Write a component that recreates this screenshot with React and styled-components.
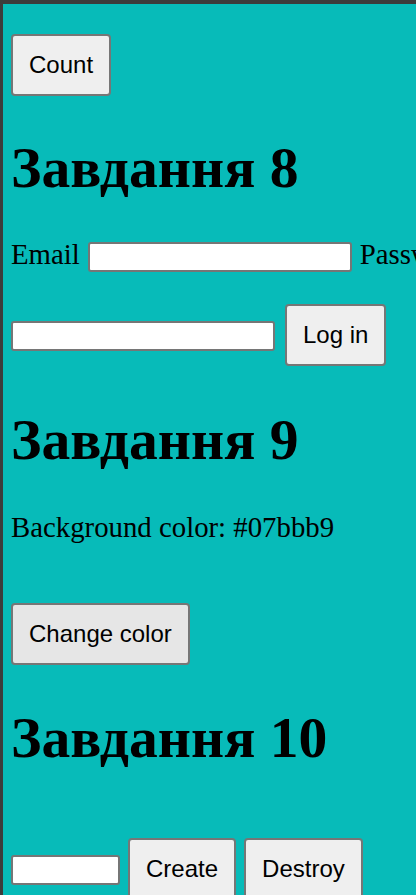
import React from "react";
import styled, { createGlobalStyle } from "styled-components";

const GlobalStyle = createGlobalStyle`
  html, body {
    margin: 0;
    padding: 0;
    overflow: hidden;
    background-color: #3c3c3c;
  }
`;

const Page = styled.div`
  min-height: 100vh;
  box-sizing: border-box;
  border-top: 4px solid #3c3c3c;
  border-left: 3px solid #3c3c3c;
  padding-left: 8px;
  background-color: #07bbb9;
  font-family: "Liberation Serif", "Times New Roman", serif;
  color: #000;
`;

const Button = styled.button`
  box-sizing: border-box;
  height: 62px;
  padding: 0 16px;
  border: 2px solid #767676;
  border-radius: 4px;
  background-color: ${({ $muted }) => ($muted ? "#e6e6e6" : "#efefef")};
  font-family: "Liberation Sans", Arial, sans-serif;
  font-size: 24px;
  line-height: 28px;
  color: #000;
  white-space: nowrap;
  flex-shrink: 0;
`;

const Title = styled.h1`
  margin: ${({ $top }) => $top}px 0 0;
  font-size: 57.6px;
  line-height: 66px;
  font-weight: bold;
`;

const Row = styled.div`
  display: flex;
  align-items: ${({ $align }) => $align || "center"};
  gap: ${({ $gap }) => $gap || 8}px;
  margin-top: ${({ $top }) => $top}px;
  white-space: nowrap;
`;

const Label = styled.span`
  font-size: 28.8px;
  line-height: 33px;
  flex-shrink: 0;
`;

const Input = styled.input`
  box-sizing: border-box;
  width: ${({ $w }) => $w}px;
  height: 30px;
  margin-top: ${({ $top }) => $top || 0}px;
  border: 2px solid #767676;
  border-radius: 3px;
  background: #fff;
  flex-shrink: 0;
`;

const Text = styled.p`
  margin: 38px 0 0;
  font-size: 28.8px;
  line-height: 33px;
`;

const Block = styled.div`
  margin-top: ${({ $top }) => $top}px;
`;

export default function App() {
  return (
    <>
      <GlobalStyle />
      <Page>
        <Block $top={30}>
          <Button>Count</Button>
        </Block>

        <Title $top={39}>Завдання 8</Title>
        <Row $top={37} $align="flex-start">
          <Label>Email</Label>
          <Input type="email" $w={264} $top={4} />
          <Label>Password</Label>
        </Row>
        <Row $top={32} $gap={10}>
          <Input type="password" $w={264} $top={2} />
          <Button>Log in</Button>
        </Row>

        <Title $top={41}>Завдання 9</Title>
        <Text>Background color: #07bbb9</Text>
        <Block $top={59}>
          <Button $muted>Change color</Button>
        </Block>

        <Title $top={40}>Завдання 10</Title>
        <Row $top={67}>
          <Input type="text" $w={109} $top={2} />
          <Button>Create</Button>
          <Button>Destroy</Button>
        </Row>
      </Page>
    </>
  );
}
